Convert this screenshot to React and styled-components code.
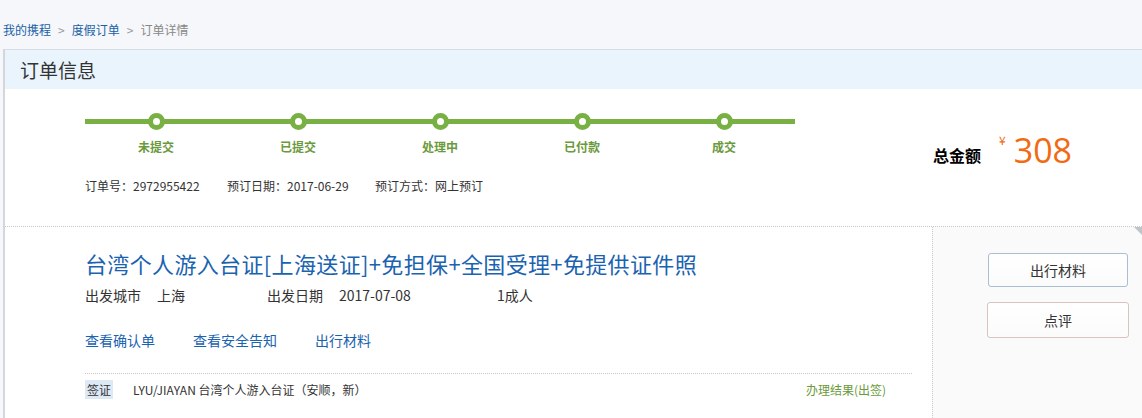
import React from "react";
import styled, { createGlobalStyle } from "styled-components";

const GlobalStyle = createGlobalStyle`
  html, body {
    margin: 0;
    padding: 0;
    background: #ffffff;
    font-family: "Noto Sans CJK SC", "Liberation Sans", sans-serif;
    color: #333;
  }
  * { box-sizing: border-box; }
`;

const steps = ["未提交", "已提交", "处理中", "已付款", "成交"];

const Page = styled.div`
  width: 1142px;
  height: 418px;
  overflow: hidden;
  padding-left: 3px;
  background: #f5f7fa;
`;

const Frame = styled.div`
  border-left: 2px solid #d3d6da;
  height: 100%;
  background: #fff;
`;

const Breadcrumb = styled.div`
  height: 49px;
  display: flex;
  align-items: center;
  padding-top: 9px;
  margin-left: -2px;
  background: #f5f7fa;
  font-size: 12px;

  a {
    color: #1a5fa6;
    text-decoration: none;
  }
  span {
    color: #999;
    margin: 0 7px;
  }
  em {
    font-style: normal;
    color: #888;
  }
`;

const PanelHeader = styled.div`
  height: 40px;
  border-top: 1px solid #d8dee4;
  background: #e9f4fd;
  padding-left: 15px;
  display: flex;
  align-items: center;
  font-size: 19px;
  color: #333;
`;

const Summary = styled.div`
  display: flex;
  height: 138px;
  border-bottom: 1px dotted #c8c8c8;
`;

const SummaryMain = styled.div`
  flex: 1;
  padding: 24px 0 0 80px;
`;

const Track = styled.div`
  display: flex;
  width: 710px;
`;

const Step = styled.div`
  width: 142px;
  display: flex;
  flex-direction: column;
  align-items: center;
  position: relative;

  &::before {
    content: "";
    position: absolute;
    left: 0;
    right: 0;
    top: 6px;
    height: 5px;
    background: #78b043;
  }
`;

const Node = styled.div`
  width: 17px;
  height: 17px;
  border-radius: 50%;
  border: 5px solid #78b043;
  background: #fff;
  position: relative;
`;

const StepLabel = styled.div`
  margin-top: 8px;
  font-size: 12px;
  font-weight: bold;
  color: #6b9a3d;
`;

const OrderMeta = styled.div`
  display: grid;
  grid-template-columns: 142px 148px auto;
  margin-top: 22px;
  font-size: 12px;
  color: #333;
`;

const Total = styled.div`
  width: 209px;
  display: flex;
  align-items: center;
  padding-bottom: 16px;
`;

const TotalLabel = styled.div`
  font-size: 16px;
  font-weight: bold;
  color: #000;
  margin-top: 10px;
  margin-right: 18px;
`;

const Currency = styled.span`
  font-size: 12px;
  color: #f06a14;
  align-self: flex-start;
  margin-top: 42px;
  margin-right: 8px;
`;

const Amount = styled.span`
  font-size: 34px;
  line-height: 40px;
  color: #f26b12;
  font-family: "Open Sans", "Liberation Sans", sans-serif;
`;

const Product = styled.div`
  display: flex;
  height: 191px;
  position: relative;

  &::after {
    content: "";
    position: absolute;
    right: 0;
    top: 0;
    border-top: 8px solid #c0c4c8;
    border-left: 8px solid transparent;
  }
`;

const ProductMain = styled.div`
  flex: 1;
  padding: 19px 20px 0 80px;
`;

const ProductTitle = styled.a`
  display: block;
  font-size: 22px;
  line-height: 34px;
  letter-spacing: 0.35px;
  color: #1a63b0;
  text-decoration: none;
`;

const InfoRow = styled.div`
  display: grid;
  grid-template-columns: 182px 230px auto;
  font-size: 14px;
  color: #333;
  margin-top: 5px;

  b {
    font-weight: normal;
    margin-right: 16px;
  }
`;

const Links = styled.div`
  display: flex;
  gap: 38px;
  margin-top: 25px;

  a {
    font-size: 14px;
    color: #1a63b0;
    text-decoration: none;
  }
`;

const VisaRow = styled.div`
  display: flex;
  align-items: center;
  margin-top: 23px;
  padding: 6px 26px 0 0;
  border-top: 1px dotted #c8c8c8;
  font-size: 12px;
  color: #333;
`;

const Tag = styled.span`
  background: #dde9f5;
  padding: 1px 2px;
  margin-right: 20px;
`;

const Result = styled.a`
  margin-left: auto;
  color: #6b9a3d;
  text-decoration: none;
`;

const Aside = styled.div`
  width: 210px;
  border-left: 1px dotted #c8c8c8;
  background: #fafafa;
  padding: 26px 0 0 55px;
  display: flex;
  flex-direction: column;
  gap: 15px;
`;

const Button = styled.button`
  width: ${(p) => p.$w}px;
  height: ${(p) => p.$h}px;
  margin-left: ${(p) => p.$shift}px;
  background: linear-gradient(#ffffff, #fbfbfb);
  border: 1px solid ${(p) => p.$border};
  border-radius: 3px;
  font-family: inherit;
  font-size: 14px;
  color: #333;
  cursor: pointer;
`;

export default function App() {
  return (
    <>
      <GlobalStyle />
      <Page>
        <Frame>
          <Breadcrumb>
            <a href="#">我的携程</a>
            <span>&gt;</span>
            <a href="#">度假订单</a>
            <span>&gt;</span>
            <em>订单详情</em>
          </Breadcrumb>
          <PanelHeader>订单信息</PanelHeader>
          <Summary>
            <SummaryMain>
              <Track>
                {steps.map((s) => (
                  <Step key={s}>
                    <Node />
                    <StepLabel>{s}</StepLabel>
                  </Step>
                ))}
              </Track>
              <OrderMeta>
                <div>订单号：2972955422</div>
                <div>预订日期：2017-06-29</div>
                <div>预订方式：网上预订</div>
              </OrderMeta>
            </SummaryMain>
            <Total>
              <TotalLabel>总金额</TotalLabel>
              <Currency>¥</Currency>
              <Amount>308</Amount>
            </Total>
          </Summary>
          <Product>
            <ProductMain>
              <ProductTitle href="#">
                台湾个人游入台证[上海送证]+免担保+全国受理+免提供证件照
              </ProductTitle>
              <InfoRow>
                <div>
                  <b>出发城市</b>上海
                </div>
                <div>
                  <b>出发日期</b>2017-07-08
                </div>
                <div>1成人</div>
              </InfoRow>
              <Links>
                <a href="#">查看确认单</a>
                <a href="#">查看安全告知</a>
                <a href="#">出行材料</a>
              </Links>
              <VisaRow>
                <Tag>签证</Tag>
                LYU/JIAYAN 台湾个人游入台证（安顺，新）
                <Result href="#">办理结果(出签)</Result>
              </VisaRow>
            </ProductMain>
            <Aside>
              <Button $w={140} $h={34} $shift={0} $border="#a9bdd3">
                出行材料
              </Button>
              <Button $w={142} $h={36} $shift={-1} $border="#d8c5bf">
                点评
              </Button>
            </Aside>
          </Product>
        </Frame>
      </Page>
    </>
  );
}
